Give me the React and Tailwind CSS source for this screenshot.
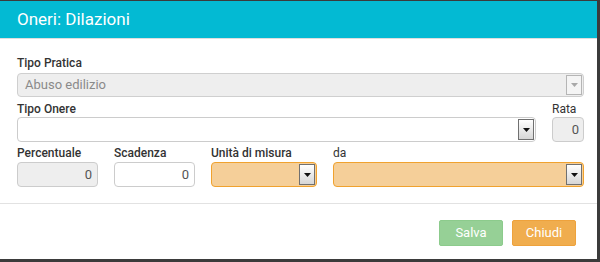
import React from "react";

// small select arrow box, like the old jqwidgets dropdown
const Arrow = ({ disabled }) => (
  <div
    className={`absolute right-[1px] top-[1px] bottom-[1px] w-[16px] flex items-center justify-center border ${
      disabled
        ? "border-[#b5b5b5] bg-[#f4f4f4]"
        : "border-[#707070] bg-gradient-to-b from-[#ffffff] to-[#d6d6d6]"
    }`}
  >
    <svg width="7" height="4" viewBox="0 0 7 4">
      <polygon points="0,0 7,0 3.5,4" fill={disabled ? "#a8a8a8" : "#111"} />
    </svg>
  </div>
);

const Label = ({ children, className = "" }) => (
  <div className={`h-[15px] leading-[15px] text-[12px] font-medium text-[#333] whitespace-nowrap ${className}`}>
    {children}
  </div>
);

export default function App() {
  return (
    <div
      className="w-[600px] h-[262px] bg-[#3b3b3b] pt-[1px] overflow-hidden"
      style={{ fontFamily: "Roboto, 'Liberation Sans', sans-serif" }}
    >
      <div className="w-[597px] h-[258px] bg-white">
        {/* header */}
        <div className="h-[38px] bg-[#03bad3] border-b border-[#dedede] flex items-center px-[17px]">
          <span className="text-[17px] text-white leading-none">Oneri: Dilazioni</span>
        </div>

        {/* body */}
        <div className="pl-[17px] pr-[13px] pt-[17px] pb-[16px] border-b border-[#e2e2e2]">
          {/* Tipo Pratica */}
          <Label>Tipo Pratica</Label>
          <div className="relative mt-[2px] h-[24px] rounded-[4px] border border-[#cfcfcf] bg-[#eeeeee] flex items-center px-[7px]">
            <span className="text-[13px] text-[#8a8a8a]">Abuso edilizio</span>
            <Arrow disabled />
          </div>

          {/* Tipo Onere + Rata */}
          <div className="mt-[5px] flex gap-[16px]">
            <div className="w-[519px]">
              <Label>Tipo Onere</Label>
              <div className="relative h-[25px] rounded-[4px] border border-[#cccccc] bg-white">
                <Arrow />
              </div>
            </div>
            <div className="w-[32px]">
              <Label className="font-normal">Rata</Label>
              <div className="h-[25px] rounded-[4px] border border-[#cccccc] bg-[#eeeeee] flex items-center justify-end px-[4px] text-[13px] text-[#555]">
                0
              </div>
            </div>
          </div>

          {/* Percentuale / Scadenza / Unità / da */}
          <div className="mt-[4px] flex gap-[16px]">
            <div className="w-[81px]">
              <Label>Percentuale</Label>
              <div className="mt-[1px] h-[25px] rounded-[4px] border border-[#cccccc] bg-[#eeeeee] flex items-center justify-end px-[5px] text-[13px] text-[#555]">
                0
              </div>
            </div>
            <div className="w-[81px]">
              <Label>Scadenza</Label>
              <div className="mt-[1px] h-[25px] rounded-[4px] border border-[#cccccc] bg-white flex items-center justify-end px-[5px] text-[13px] text-[#555]">
                0
              </div>
            </div>
            <div className="w-[106px]">
              <Label>Unità di misura</Label>
              <div className="relative mt-[1px] h-[25px] rounded-[4px] border border-[#f0a22e] bg-[#f5cf99]">
                <Arrow />
              </div>
            </div>
            <div className="flex-1">
              <Label className="font-normal">da</Label>
              <div className="relative mt-[1px] h-[25px] rounded-[4px] border border-[#f0a22e] bg-[#f5cf99]">
                <Arrow />
              </div>
            </div>
          </div>
        </div>

        {/* footer */}
        <div className="flex justify-end gap-[9px] pt-[16px] pr-[21px]">
          <button className="w-[64px] h-[26px] rounded-[2px] border border-[#8ccb8c] bg-[#96d096] text-white text-[13px]">
            Salva
          </button>
          <button className="w-[64px] h-[26px] rounded-[2px] border border-[#eea23c] bg-[#f0ad4e] text-white text-[13px]">
            Chiudi
          </button>
        </div>
      </div>
    </div>
  );
}
